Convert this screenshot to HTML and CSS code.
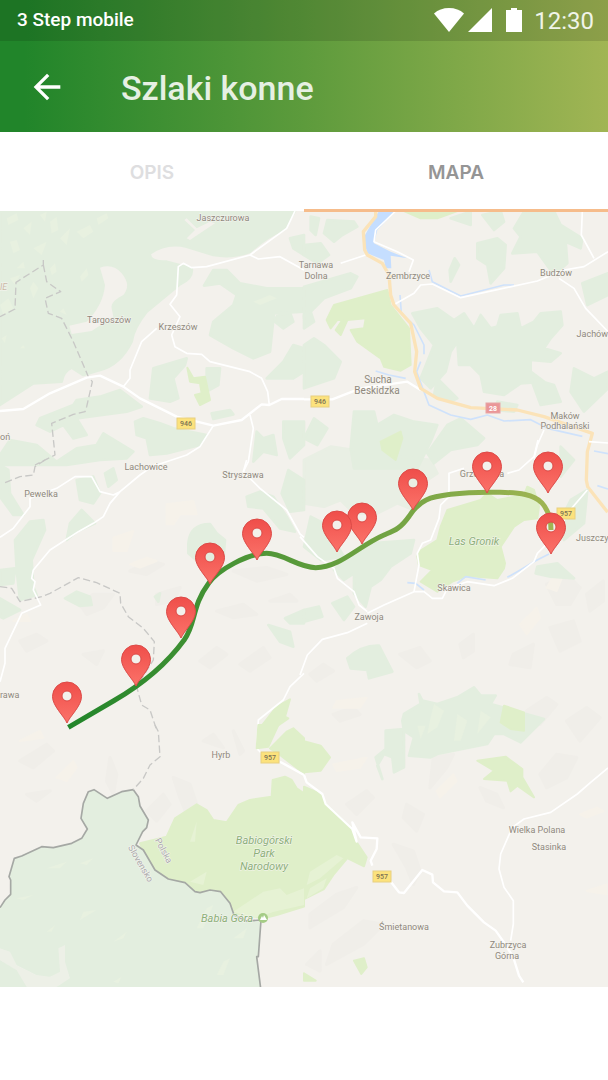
FILE: index.html
```html
<!DOCTYPE html>
<html lang="pl">
<head>
<meta charset="utf-8">
<meta name="viewport" content="width=device-width, initial-scale=1">
<title>Szlaki konne</title>
<link rel="stylesheet" href="styles.css">
</head>
<body>
<header class="header">
  <div class="status">
    <span class="carrier">3 Step mobile</span>
    <div class="indicators">
      <svg class="wifi" viewBox="0 0 30 24" aria-hidden="true"><path d="M0 5.500Q6 0 15 0t15 5.500L15 24z"/></svg>
      <svg class="signal" viewBox="0 0 24 24" aria-hidden="true"><path d="M24 0v24H0z"/></svg>
      <svg class="battery" viewBox="0 0 16 24" aria-hidden="true"><path d="M5 0h6v2h5v22H0V2h5z"/></svg>
      <time class="clock">12:30</time>
    </div>
  </div>
  <div class="appbar">
    <button class="back" type="button" aria-label="Wstecz">
      <svg viewBox="0 0 24 24" aria-hidden="true"><path d="M20 11H7.830l5.590-5.590L12 4l-8 8 8 8 1.410-1.410L7.830 13H20z"/></svg>
    </button>
    <h1 class="title">Szlaki konne</h1>
  </div>
</header>
<nav class="tabs">
  <button class="tab" type="button">OPIS</button>
  <button class="tab tab-active" type="button" aria-current="page">MAPA</button>
</nav>
<main>
<svg class="map" viewBox="0 0 608 776" role="img" aria-label="Mapa szlaku">
  <defs>
    <linearGradient id="route-fill" gradientUnits="userSpaceOnUse" x1="205" y1="0" x2="1653" y2="0">
      <stop offset="0" stop-color="#21852a"/><stop offset=".5" stop-color="#5c9b3b"/><stop offset="1" stop-color="#a0b553"/>
    </linearGradient>
    <linearGradient id="pin-fill" x1="0" y1="0" x2="0" y2="1">
      <stop offset="0" stop-color="#ef4e4a"/><stop offset="1" stop-color="#fb7269"/>
    </linearGradient>
    <path id="pin" fill-rule="evenodd" d="M0 0C-3-7-14.500-17-14.500-26.500a14.500 14.500 0 0 1 29 0C14.500-17 3-7 0 0zM-5-27a5 5 0 1 0 10 0a5 5 0 1 0-10 0z"/>
  </defs>

  <g transform="scale(.333333)">
    <!-- relief shading -->
    <g class="relief">
      <path d="M240 1180l40-30 60 0-30 40-50 20zM390 1080l60-30 40 10-50 30zM470 1150l70-20-20 40-50 10zM60 1290l50-20 30 20-60 30zM250 1330l60-10-20 40zM700 1080l100-10 60 20-90 20zM650 1200l80-20 40 30-70 10zM600 1350l50-40 30 20-50 40zM720 1360l70-50 20 30-60 40zM810 1170l60-20 20 20zM60 1650l80-50 20 20-60 50zM80 1750l70-10-40 30zM330 1640l20 50-10 60-20-40zM520 1700l50 20 20 60-30 30-20-50zM440 1800l50-50 20 30-40 50zM610 1590l30-20 30 40zM700 1560l30 60-10 10z"/>
      <path d="M1200 1330l60-20 30 40-40 20zM1380 1300l40-30 0 50-30 20zM1540 1330l60-30-10 70-60-10zM1640 1120l60-30 40 40-30 50-40 0zM1650 1250l70-20 20 60-60 30zM1760 1150l50-40v60l-40 30zM1580 1500l60-40 30 20-50 60zM1620 1690l50-60 60 10-30 60-60 30zM1700 1530l60-40 40 30-60 70zM1040 1780l60-40 20 20-50 50zM1220 1780l50 30-20 50-40-40zM1000 1510l60-20 20 20-60 20zM1180 1900l60 20 20 60-20 40-20-50zM930 2110l80-60 60-20-40 60-100 60zM1000 2200l90-70 60 10-60 60-110 60zM920 2260l40-40 0 60zM1300 1640l60-10-20 40-50 60zM1440 1730l50 20 20 40-50-20zM930 1390l40-30 30 20-50 30z"/>
    </g>
    <path class="sunlit" d="M500 880l80-10 10 40-50 0-20 30-20 0zM340 980l60-20-20 60-40 0zM390 1060l50-20 30 10-50 20zM40 1230l40-20 10 20zM170 1700l50-50 10 20-30 40zM60 1590l60-30 10 20zM1010 1470l90-10-20 30-80 0zM1000 1660l100-20-20 30-70 10zM1310 1740l50-50 10 20-50 50zM1760 2040l60-20v30zM1640 1130l30-50 20 10-20 50zM1560 1240l50-50 10 30-40 50zM1740 1810l50-20 20 10-50 20z"/>

    <!-- north-west: Krzeszów -->
    <g transform="translate(0 -18)">
      <path class="forest" d="M0 18H885L850 75Q800 95 750 140Q700 160 640 150L560 125Q500 110 450 145Q445 170 500 170L575 190Q580 220 540 238L440 320Q400 370 395 410Q360 480 300 495L250 510 215 488Q190 500 185 530L100 535 0 600z"/>
      <path class="forest" d="M612 242l28-47h40l40 40 80 15h112v70l-90 5-12 115-50 20-60-30-70-40 10-40 60-50 10-30-50-35zM870 100l42-10v60l-32-20zM460 490l100-30-5 20-35 40 15 60-25 10-60-10zM620 490h40l-5 50-35 20zM300 575l60-20 65 50-45 15-90 12-60 8 30 50-40 10-30-40-40 20-40-20 10-20 100-40 10-15zM405 650l25-10 50 15 40 15 100 20-20 30-100 25-50 5-10-50-30-10zM310 685l90 55-20 20-80 5-100 15H0v-30l30-45 80 15 60 50 60-40 60-10zM635 625l55-10 10 13-60 14zM800 520l50-50 30-50 32 10v70l-32 20zM770 680l20 20 30-10 10 60-40-10-30 30zM850 650h62v70l-42 40-20-60z"/>
      <path class="land" d="M300 188Q340 175 365 205Q395 240 370 270Q330 290 335 310L340 335 275 378 215 387 208 362 260 350Q310 300 315 240zM560 40l30 30 40-20 15 5-75 50-10-5 25-25-32-30z"/>
      <path class="forest" d="M832 332l38-10 10 28-30 20-28-22z"/>
      <path class="glade" d="M150 50l20-15 5 40-20 10zM180 100l30-30-10 50zM100 130l40-20-15 40zM240 215l20-25 5 20-20 20zM30 110l20-5 10 30-20 10zM230 80l40-20 10 20-30 20zM0 300l25-20 15 30-30 20zM180 320l10-10 10 20zM760 290l50-20 20 10-50 20zM20 40l30-15 5 20-30 15zM70 70l25-20-5 40zM290 40l30-15 5 15-30 20zM120 30l20-10-5 30zM50 190l20-20 5 20zM150 190l15-15 5 25-15 10zM90 250l10-20 15 20-15 30zM5 400l15-10-5 25zM60 430l10-10 5 10zM30 220l30-10-15 30z"/>
      <path class="park" d="M562 488l18 32 35-5 15 70-30 15-15-30 20-5-5-30-30-5z"/>
      <path class="dash" d="M130 165v15l-82 52-3 80-45 23M130 180l10 50 42 30-47 20 10 45 40 15 35 70 45 105 12 15-17 75-5 15-35 8-65 27 10 95-60 30"/>
      <path class="road" d="M885 18l-25 52-110 80-130 35-45 3-25-13-15 10-5 85-20 28 30 37-25 55 10 35 35 20 45 3 25 22 120 30 35 20 18 40 5 40M750 150l25 12 65-7 72 40M470 370l-45 40-35 85v25l-20 25M640 662l-40 63-40 25-90 30M750 630l10 40-15 100-15 30"/>
      <path class="road main" d="M0 618l70-6 80-47 110-47 40-6 70 33 50 35 110 55 110 27 85-17 60-47 23 2 37-18h67"/>
    </g>

    <!-- north-east: Sucha Beskidzka -->
    <g transform="translate(912 -18)">
      <path class="forest" d="M20 35l25 5-10 50-15-15zM70 45l80 5 10 15-45 25-25 20-30-25zM0 120l50-5 25 35-35 25-40-25zM0 245l140-40 20 10-20 35-80 30-20 20-40 40zM325 325l75-15 50 35 30-20 30 45 20-40 30 40 20-5 10-35 50-5 10 45 40-20 20-25 60-5 5 40-35 40-20 30 50 15-30 25-60-5v35l40 30-70 5-50 35-60-10-10-50-30-30h-35l-5-70-20 30-15 60-45 50-30-30 40-100-40-50zM630 70l30-50 90-2 20 42 65 40-5 30-45-20 5 65-40 35-50-70-75 5 25-50zM520 115l60-15 25 20-5 70-40 45-10-55-30-20zM437 195l15-35 13 20-25 50zM535 30l55-12 10 32-30 25zM440 40l60-20v40zM835 235l77-30v65l-62 30z"/>
      <path class="forest" d="M0 330l20-10 10 30-30 20zM0 420l30-20 30 20 50 50-20 50-90 30zM150 620l60 0 10 40 50-30 60 20 70 10-20 50-40 80H150l-10-60zM430 660l40-20 70 60-20 20-80 15-50 40-20-30zM400 520l60 60-20 10-50-20zM810 490l60 30 42-20v50l-72 70-40-60zM680 520l70 20 20 50-60 10zM580 590l60 10-10 20-60-5zM30 640l40 30-30 50-40-20z"/>
      <path class="park" d="M68 345l22-45 160-45 10 45 55 70 5 110-30 17-50-12-10-25-70-50-20-35 40-5 5-30-55 5-20 45-15-15 20-30h-15l-20 25zM300 18h160l-60 22h-50z"/>
      <path class="lake" d="M225 18h50l-55 57-10 40 50 25 50 20-50-8 2 38h-17l-5-25-50-20-12-45 22-40z"/>
      <path class="river" d="M288 270l4 55 38 35 30 60v28M350 470l-12 30 22 60 15 40 65 30 60 13 50-13 50 18 80-4 50 26 105 24M375 195l10 35 85 43 130-33 30 0M215 498l40 12 50 10"/>
      <path class="road" d="M275 18l-60 57-5 35 70 30 48 25-13 35M268 300l62-35 20-25 35-3 85 41 230-50 80-33 60-10 72-45M835 18l-3 72 38 70M765 220l45 30 35 60 67 70M185 150l-75 25M720 675l-20 45-10 40"/>
      <path class="road main" d="M0 583h25l60 0 85-33 140-20 40 25"/>
      <path class="highway" d="M215 18v17l-37 45 4 55 8 15 45 25 20 35 5 60 10 30 50 55 18 85-6 60 18 50 50 30 100 28 140 7 80 20 145 50-15 55-3 85 4 20 60 77"/>
    </g>

    <!-- west: Pewelka, Lachowice -->
    <g transform="translate(0 747)">
      <path class="forest" d="M0 15l25 15 5 70 40 65H40L0 110zM230 60l50-10 20 50-20 30-40-10zM315 40l25-15 10 35-25 20zM90 185l40-5 5 30-40 90 5 80 10 25-50 15-10-90-5-90zM0 330l45-5-5 45-40 5zM0 415l60 35-50 25-10-5zM200 240l10-50 35-40 40 40-55 25zM195 415l35-20 40 15 5 25-35 3zM565 250q5-58 65-58l20 28 25 20-5 60-70 10-35-30zM740 110l40-15 40 15 40 60 25 45-45-10-50-60-45-5zM845 100l20-70 47 30v90l-42 5zM805 495l65 20 10 45-40-15zM855 475l57-25v40h-42zM465 410l15-10-5 25z"/>
      <path class="park" d="M775 810l55-70 40-22-15 52 10 5-50 35z"/>
      <path class="dash" d="M135 0l-30 20-5 25-40 5-50 20M0 380l35 5 25 40 65-15 25-10 85-47 55 15 70 32 2 30 23 40 45 35 33 40-3 55-50 80 15 55 25 15 20 60"/>
      <path class="road" d="M470 10l-50 35-60 50-30 35-20 40-30 20-45 25-85 55-50 60-5 25 10 10-5 25 22 45-57 25-50 105v45l-15 55M0 232l40-27 50-65v-25l80-30 55-35h50l25 45 40 10 20-10M740 0l-10 35 50 50 80 65 40 72 12 10"/>
      <path class="road" d="M912 640l-42 40-20 40-75 60-5 85 15 15"/>
    </g>

    <!-- east: Las Gronik, Zawoja -->
    <g transform="translate(912 687)">
      <path class="forest faint" d="M0 60l80-40 70 10 10-30h70l60 50 90 10 20 40-60 40-10 70-50-20-60 30-70 0-40-40-50 20-60-10z"/>
      <path class="forest" d="M20 230l40 20 60 100-70 10-50-40zM130 350l70-40 130-10-10 40-60 40-30 40-30 20-15 60-35-40v-60l-30 20-30-30zM85 490l45-20 20 30-30 40zM0 510l45-10 10 30-55 15zM130 655q45-40 95-38l40 78-70 20-5-25-50-5zM700 380l60-10 50 45-70-5-45-10zM770 20l40 40-40 50zM800 180l50-30-10 100-60 50-20-40z"/>
      <path class="park" d="M345 335l55-35 10-40 20-50 100-30 19-20 31 20 80-15 10-25 20 10 15 50-5 35-40 5-30 20-40 60 13 50-3 15-20 30-90-7-45 17-45 30-50-30 35-35-40-15-5-25zM230 5l60-30 5 20-20 65-40-30z"/>
      <path class="river" d="M870 33l42 8M310 428l25 2 25 20M460 430l25-20 60 10M610 412l35-20 50-30 40-20M880 137l32 10"/>
      <path class="road" d="M-12 290l52 60 50 35 10 30 50 40 15 40 25 20M190 550l-60 28-75 20-45 47-22 60M330 455l15-80-5-35 15-30 25-10 25-65 5-40 25-25v-70l45-15M610 100l35-10 45-40 12-50M855 5l57 4"/>
      <path class="road" d="M190 520l50-25 90-40h30l25 20h30l15-30 60-20 80 12 55-22 65-50 10-25 60-60 30-60 60-70"/>
    </g>

    <!-- south-east: Zubrzyca Górna -->
    <g transform="translate(912 1449)">
      <path class="forest" d="M345 0l10 20 45 10 60-20 50-30 20 25 45 0-15 25 160 45-70 70-50-25h-30l-20 30-150 30-20 10-65-5 15-55-30-20-5-30 5-20 50-30zM245 110l55-5v115l-30 15-5-45-25-10-20 35 15 40-20-65 30-25z"/>
      <path class="glade" d="M390 30l30 20-20 50-30 20 10-50zM460 60l30 20-20 60-20 0zM530 50l30 20-40 50zM340 95l25 0-15 40z"/>
      <path class="park" d="M600 35l60 20v55l-40-5-30-20zM520 200l85-12 50 37v25l35 60-50-35-20 17-10-32-70-5 30-25zM0 142l50 13 28 35-28 40-50 5zM150 800l30-7 8 27-16 20zM0 838l35 22H0z"/>
    </g>

    <!-- south-west: Slovakia and Babiogórski Park -->
    <g transform="translate(0 1542)">
      <path class="park" d="M775 0h60l-30 65-35 5zM810 70l50-50 20-10 32 30v105l-72-55z"/>
      <path class="park" d="M420 355l80-20 25-55 65-42 30 17 20 30 40 7 35-52 35-15 65-10 3-50 37-10 20 10 15 25 22 15v-20l50 22 15 30 80 75 13 40 30 45-8 27-50-25-40 48-30 45-60 30v23l-82 25-40 10-90-15-10-30-30-35h-70l-40-30-50-10-40-30-30-50z"/>
      <path class="meadow" d="M570 470l50-30-10 40zM700 560l90-60 50-10 20 20 52-20v50l-90 20-60 20zM930 440l80-50 20 10-70 60-40 20zM590 290l-20 60 15 0zM930 490l50-30-10 30-50 30z"/>
      <path class="slovakia" d="M0 548l15-23 17-17v-43l-5-10 16-55 22-7 60-28 35 3 55-13 30-15 17-28-19-32 7-45 15-35 17-6 40 26 43-20 35-6 15 21 5 28 25 42-5 23-12 12-20 40 22 15 35 60 40 27 50 11 30 27 15 3 30-8 32 5 28 35 12 35 38 18 43-3-8 110h-5l12 95H0z"/>
      <path class="glade" d="M140 430l60-20-20 20zM240 415l40-15-20 20zM50 520l50-10-30 15zM250 560l40-5-50 30zM340 650l40-30-10 20zM590 610l30-60 20-10-30 70zM650 750l20-40 20-10-20 50zM700 640l40-30-10 30zM140 620l25-20-10 20zM340 770l25-15-10 20z"/>
      <path class="land faint" d="M0 670l30 10 20 40 60 30 40 5 30-15-5-70 20-10 0 50 15 50-40 26H80l-30-50-50-30z"/>
      <path class="border" d="M0 548l15-23 17-17v-43l-5-10 16-55 22-7 60-28 35 3 55-13 30-15 17-28-19-32 7-45 15-35 17-6 40 26 43-20 35-6 15 21 5 28 25 42-5 23-12 12-20 40 22 15 35 60 40 27 50 11 30 27 15 3 30-8 32 5 28 35 12 35 38 18 43-3-8 110h-5l12 95"/>
      <path class="dash" d="M465 0l10 20 5 75-30 25-20 40-30 34"/>
      <path class="road main" d="M840 110l72 40"/>
    </g>
    <g transform="translate(912 1449)">
      <path class="road main" d="M0 243l8 22 47 35 10 30 80 75 13 38-13-58 25 45 50 3-2 32-18 35 5 15M250 550l35 45 15 2 55-69 30 14 2 23 33 27 40 3 30 40 50 50 35 25 25 35 28 45 17 55 13 20"/>
      <path class="road" d="M912 222l-52 43-40 35-80 55-80 20-35 25-35 80-5 45 15 55 28 40v70l-8 50"/>
    </g>
  </g>

  <g class="shields">
    <g class="shield" transform="translate(186 212)"><rect x="-9" y="-5" width="18" height="11"/><text y="3">946</text></g>
    <g class="shield" transform="translate(320 190)"><rect x="-9" y="-5" width="18" height="11"/><text y="3">946</text></g>
    <g class="shield national" transform="translate(493 197)"><rect x="-7" y="-5" width="14" height="10"/><text y="3">28</text></g>
    <g class="shield" transform="translate(566 302)"><rect x="-9" y="-5" width="18" height="11"/><text y="3">957</text></g>
    <g class="shield" transform="translate(270 546)"><rect x="-9" y="-5" width="18" height="11"/><text y="3">957</text></g>
    <g class="shield" transform="translate(382 665)"><rect x="-9" y="-5" width="18" height="11"/><text y="3">957</text></g>
  </g>

  <g class="places">
    <text x="223" y="10">Jaszczurowa</text>
    <text x="109" y="112">Targoszów</text>
    <text x="178" y="119">Krzeszów</text>
    <text class="region from-left" x="0" y="79">IE</text>
    <text class="from-left" x="0" y="229">oń</text>
    <text x="316" y="57">Tarnawa</text>
    <text x="316" y="68">Dolna</text>
    <text x="408" y="68">Zembrzyce</text>
    <text x="556" y="65">Budzów</text>
    <text class="to-right" x="608" y="126">Jachów</text>
    <text class="town" x="378" y="172">Sucha</text>
    <text class="town" x="377" y="183">Beskidzka</text>
    <text x="565" y="208">Maków</text>
    <text x="565" y="218">Podhalański</text>
    <text x="146" y="259">Lachowice</text>
    <text x="41" y="286">Pewelka</text>
    <text x="243" y="267">Stryszawa</text>
    <text class="from-left" x="0" y="487">rawa</text>
    <text x="482" y="266">Grzechynia</text>
    <text class="from-left" x="576" y="330">Juszczy</text>
    <text x="454" y="380">Skawica</text>
    <text x="369" y="409">Zawoja</text>
    <text x="221" y="547">Hyrb</text>
    <text x="537" y="622">Wielka Polana</text>
    <text x="549" y="639">Stasinka</text>
    <text x="404" y="719">Śmietanowa</text>
    <text x="508" y="737">Zubrzyca</text>
    <text x="507" y="748">Górna</text>
    <text class="country" transform="translate(161 641) rotate(62)">Polska</text>
    <text class="country" transform="translate(138 654) rotate(60)">Slovensko</text>
    <text class="nature" x="474" y="334">Las Gronik</text>
    <text class="nature" x="264" y="633">Babiogórski</text>
    <text class="nature" x="264" y="646">Park</text>
    <text class="nature" x="264" y="659">Narodowy</text>
    <text class="nature" x="227" y="711">Babia Góra</text>
  </g>
  <circle class="peak" cx="263" cy="707" r="5"/>
  <path class="peak-mark" d="M260 709l2-4 1 2 1-3 3 5z"/>

  <g transform="scale(.333333)">
    <path class="route" d="M205 1549L340 1470C440 1412 510 1345 553 1286C588 1238 575 1185 625 1118C655 1075 745 1027 800 1027C850 1027 895 1070 947 1070C1020 1070 1075 1005 1152 972C1180 960 1200 955 1228 915C1260 865 1290 858 1352 850C1400 844 1450 843 1500 844C1560 845 1600 850 1625 875C1645 897 1653 920 1653 957"/>
  </g>
  <g class="pins">
    <use href="#pin" x="67" y="512"/><use href="#pin" x="136" y="475"/><use href="#pin" x="181" y="427"/>
    <use href="#pin" x="210" y="373"/><use href="#pin" x="257" y="349"/><use href="#pin" x="362" y="333"/>
    <use href="#pin" x="337" y="341"/><use href="#pin" x="413" y="299"/><use href="#pin" x="487" y="282"/>
    <use href="#pin" x="548" y="282"/><use href="#pin" x="551" y="343"/>
  </g>
</svg>
</main>
</body>
</html>
```
FILE: styles.css
```css
* { box-sizing: border-box; }
body {
  margin: 0;
  min-height: 100vh;
  background: #fff;
  font-family: Roboto, "Noto Sans", sans-serif;
}
button { border: 0; padding: 0; background: none; font: inherit; cursor: pointer; }

.header {
  background: linear-gradient(90deg, #21852a, #21852a 4%, #5d9b3c 50%, #a1b554);
  color: #fff;
}
.status {
  display: flex;
  align-items: center;
  justify-content: space-between;
  height: 41px;
  padding: 0 14px 2px 17px;
  background: rgba(0, 0, 0, .12);
}
.carrier { font-size: 19px; font-weight: 500; }
.indicators { display: flex; align-items: center; fill: #fff; }
.indicators svg { height: 24px; }
.wifi { width: 30px; margin-right: 4px; }
.signal { width: 24px; margin-right: 14px; }
.battery { width: 16px; margin-right: 12px; }
.clock { padding-top: 2px; font-size: 24px; color: #f0f4e8; }

.appbar {
  display: flex;
  align-items: center;
  gap: 54px;
  height: 91px;
  padding-left: 27px;
}
.back { width: 40px; height: 40px; }
.back svg { display: block; width: 40px; height: 40px; fill: #fff; }
.title {
  margin: 0;
  padding-top: 2px;
  font-size: 34px;
  font-weight: 500;
  line-height: 40px;
  color: #e6f0e3;
}

.tabs { display: grid; grid-template-columns: 1fr 1fr; height: 79px; }
.tab {
  position: relative;
  padding-top: 2px;
  font-family: Inter, sans-serif;
  font-size: 19px;
  font-weight: 600;
  color: #dedee0;
}
.tab-active { color: #959595; }
.tab-active::after {
  content: "";
  position: absolute;
  left: 0;
  right: 0;
  bottom: -1px;
  height: 3px;
  background: #f6bc8b;
}

.map { display: block; width: 100%; height: auto; overflow: hidden; background: #f3f1ec; }
.relief { fill: #f0eee9; stroke: #f0eee9; stroke-width: 10; stroke-linejoin: round; }
.sunlit { fill: #f6f2ea; stroke: #f6f2ea; stroke-width: 6; stroke-linejoin: round; }
.forest { fill: #e3eedf; stroke: #e3eedf; stroke-width: 8; stroke-linejoin: round; }
.land { fill: #f3f1ec; }
.faint { opacity: .6; }
.glade { fill: #e8f1e0; }
.meadow { fill: #e6f2d4; }
.park { fill: #dfefc9; stroke: #dfefc9; stroke-width: 6; stroke-linejoin: round; }
.slovakia { fill: #e3eedf; }
.lake { fill: #c5deff; }
.river, .road, .highway, .border, .dash, .route { fill: none; stroke-linejoin: round; }
.river { stroke: #cfe2fb; stroke-width: 5; }
.road { stroke: #fff; stroke-width: 5; }
.main { stroke-width: 7; }
.highway { stroke: #fbe3b8; stroke-width: 10; }
.border { stroke: #a5a8a4; stroke-width: 5; }
.dash { stroke: #c8c8c6; stroke-width: 4; stroke-dasharray: 22 10; }

.places { font-size: 9px; fill: #8f887c; text-anchor: middle; }
.places text { paint-order: stroke; stroke: #f6f5f1; stroke-width: 1px; }
.places .from-left { text-anchor: start; }
.places .to-right { text-anchor: end; }
.places .town { font-size: 10px; }
.places .region { fill: #c8b8a4; font-style: italic; }
.places .country { fill: #aaa; }
.places .nature { font-size: 11px; font-style: italic; fill: #8cb078; }

.shield rect { fill: #fce27c; stroke: #e8d080; stroke-width: 1px; }
.shield text { font-size: 7px; font-weight: 500; fill: #7d7354; text-anchor: middle; }
.national rect { fill: #ea9698; stroke: #e8a5a5; }
.shield.national text { font-weight: 700; fill: #fff; }
.peak { fill: #a5cc86; }
.peak-mark { fill: #fff; }

.route { stroke: url(#route-fill); stroke-width: 15; }
.pins { fill: url(#pin-fill); stroke: #dc4a47; stroke-width: 1px; }
```
